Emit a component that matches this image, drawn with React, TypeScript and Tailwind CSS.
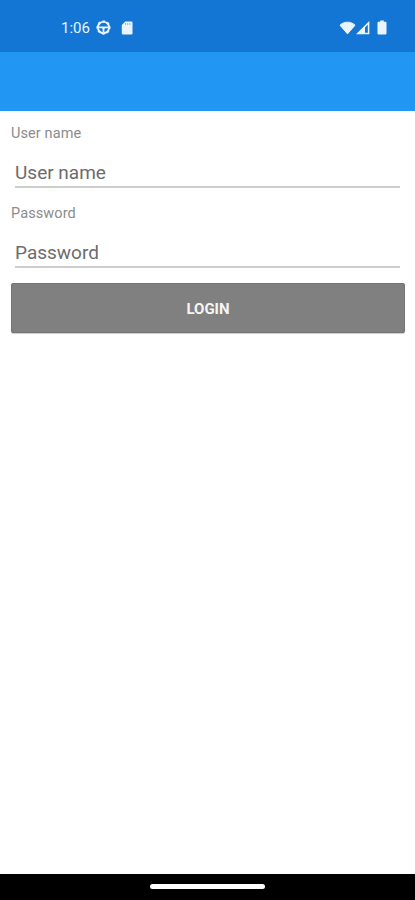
import { useState } from "react";

function StatusBar() {
  return (
    <header className="flex h-[52px] items-center justify-between bg-[#1376d4] pt-[3px] pr-7 pl-[61px] text-[#eaf4ff]">
      <div className="flex items-center">
        <span className="w-[35px] pt-px text-[15px] leading-5">1:06</span>
        <svg className="h-[15px] w-[15px]" viewBox="0 0 16 16" fill="none" stroke="currentColor">
          <circle cx="8" cy="8" r="6" strokeWidth="2" />
          <circle cx="8" cy="8" r="7" strokeWidth="1.2" strokeDasharray="2.75 2.75" strokeDashoffset="1.37" />
          <path d="M2.5 7.8h11M8 7.8v5.5" strokeWidth="1.9" />
          <path d="M6.200 8.200h3.600L8 10.500z" fill="currentColor" stroke="none" />
        </svg>
        <svg className="ml-[10px] h-[14px] w-3" viewBox="0 0 12 14">
          <path
            d="M4.300.5h6A1.200 1.200 0 0 1 11.500 1.700v10.600a1.200 1.200 0 0 1-1.200 1.200H2A1.200 1.200 0 0 1 .8 12.300V4z"
            fill="currentColor"
          />
          <path d="M4.500 2v2M6.700 2v2M8.900 2v2" stroke="#1376d4" strokeOpacity=".45" />
        </svg>
      </div>
      <div className="flex items-center">
        <svg className="h-[14px] w-[17px]" viewBox="0 0 17 14" fill="currentColor">
          <path
            d="M8.500 12.900 1 4.200C3 2.200 5.600 1.200 8.500 1.200s5.500 1 7.500 3z"
            stroke="currentColor"
            strokeLinejoin="round"
          />
        </svg>
        <svg className="h-[14px] w-[14px]" viewBox="0 0 14 14">
          <path d="M1.800 12.600 12.600 1.800v10.800z" fill="none" stroke="currentColor" strokeWidth="1.500" />
          <path d="M1 13 9 5V13z" fill="currentColor" />
        </svg>
        <svg className="ml-[7px] h-[15px] w-[10px]" viewBox="0 0 10 15" fill="currentColor">
          <path d="M3.200.5h3.600v1.300h1.400c.8 0 1.300.5 1.300 1.300v10.100c0 .8-.5 1.300-1.300 1.300H1.800c-.8 0-1.300-.5-1.300-1.300V3.100c0-.8.5-1.300 1.300-1.300h1.400z" />
        </svg>
      </div>
    </header>
  );
}

type FieldProps = {
  label: string;
  type: string;
  value: string;
  onChange: (value: string) => void;
};

function Field({ label, type, value, onChange }: FieldProps) {
  return (
    <label className="block h-20 pt-[13px]">
      <span className="block text-[14.500px] leading-5 tracking-[0.1px] text-[#8c8c8c]">{label}</span>
      <input
        type={type}
        placeholder={label}
        value={value}
        onChange={(e) => onChange(e.target.value)}
        className="mx-1 mt-[13px] block h-[31px] w-[385px] border-b-2 border-[#cdcdcd] pt-px text-[19px] text-[#666] outline-none placeholder:text-[#6c6c6c]"
      />
    </label>
  );
}

export default function App() {
  const [userName, setUserName] = useState("");
  const [password, setPassword] = useState("");

  return (
    <div className="flex h-[900px] w-[415px] flex-col bg-white font-['Roboto',sans-serif]">
      <StatusBar />
      <div className="h-[59px] bg-[#2196f3]" />
      <main className="flex-1 pr-[10px] pl-[11px]">
        <form onSubmit={(e) => e.preventDefault()}>
          <Field label="User name" type="text" value={userName} onChange={setUserName} />
          <Field label="Password" type="password" value={password} onChange={setPassword} />
          <button
            type="submit"
            className="mt-3 block h-[50px] w-full rounded-[2px] border border-[#747474] bg-[#808080] pt-[2px] text-[15px] font-bold text-[#f5f5f5] shadow-[0_1px_1px_rgba(0,0,0,0.2)]"
          >
            LOGIN
          </button>
        </form>
      </main>
      <footer className="flex h-[26px] justify-center bg-black pt-[10px]">
        <div className="h-[5px] w-[115px] rounded-full bg-white" />
      </footer>
    </div>
  );
}
